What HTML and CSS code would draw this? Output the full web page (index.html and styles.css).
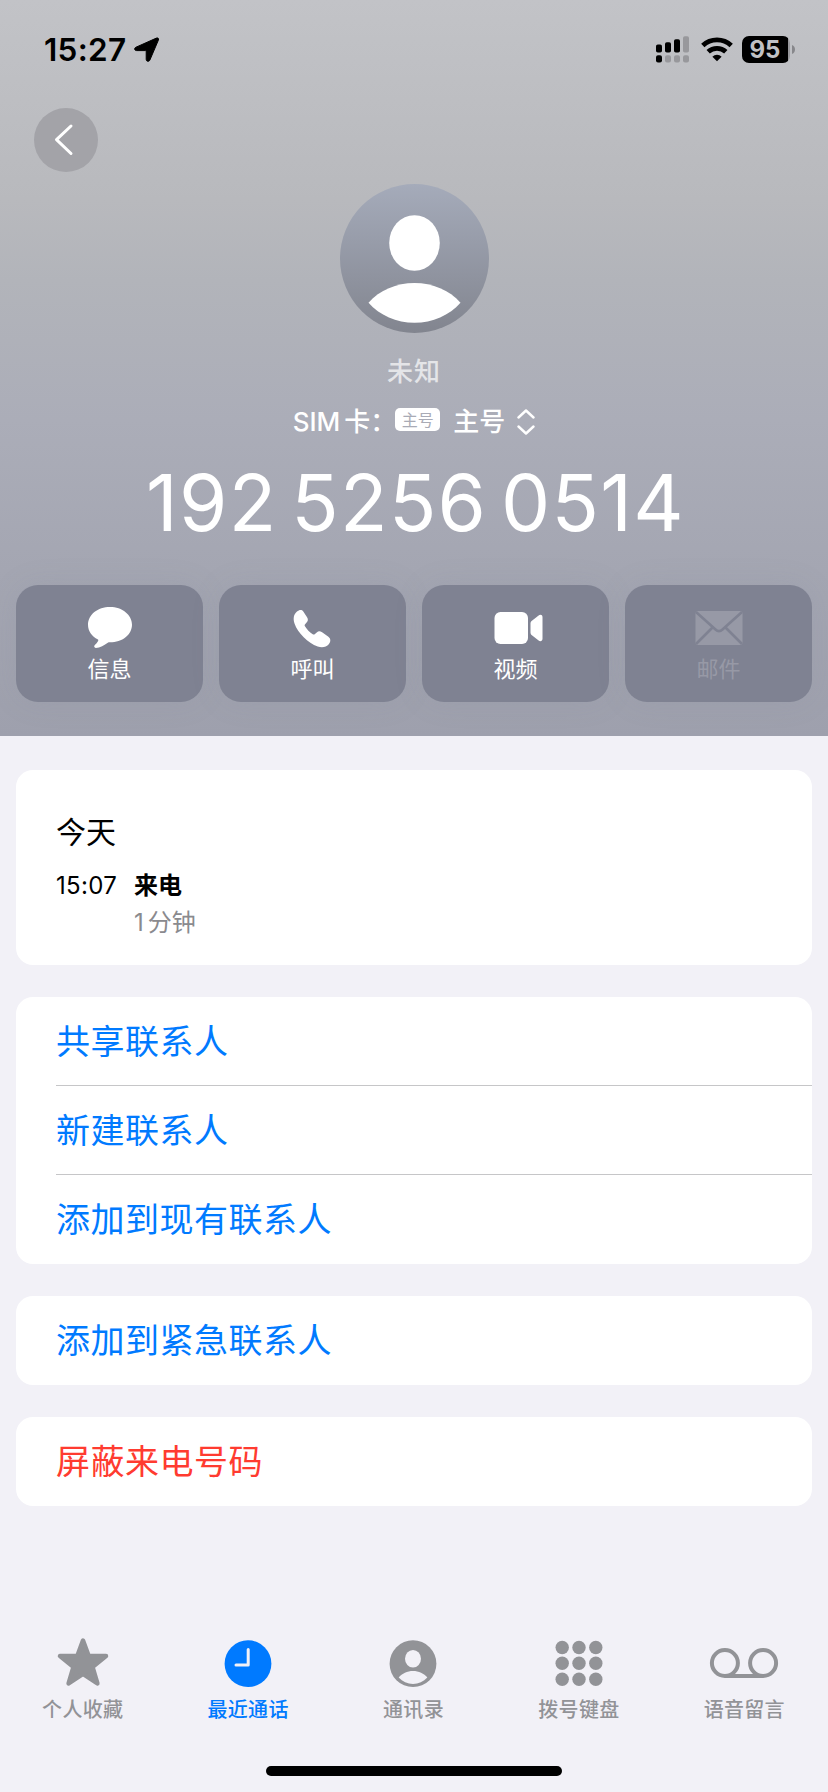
FILE: index.html
```html
<!DOCTYPE html>
<html lang="zh-CN">
<head>
  <meta charset="UTF-8" />
  <meta name="viewport" content="width=device-width, initial-scale=1.0"/>
  <title>最近通话</title>
  <link rel="stylesheet" href="styles.css">
</head>
<body>
  <header class="header">
    <!-- Status bar -->
    <div class="status-bar">
      <span class="time">15:27</span>
      <svg class="location" width="26" height="26" viewBox="0 0 26 26">
        <path d="M2 10.2 22.4 1.1c1.5-.7 2.7.5 2 2L15.9 23c-.8 2-3.7 1.6-3.7-.6V14.200a.6.6 0 0 0-.6-.6H2.700C.3 13.600-.1 11.100 2 10.200z" stroke="#000" stroke-width="1" stroke-linejoin="round"/>
      </svg>
      <div class="status-icons">
        <svg width="34" height="27" viewBox="0 0 34 27">
          <g>
            <rect x="0" y="8.500" width="6" height="8" rx="1.800"/>
            <rect x="9" y="6.300" width="6" height="10.200" rx="1.800"/>
            <rect x="18" y="3.200" width="6" height="13.300" rx="1.800"/>
            <rect x="0" y="19.200" width="6" height="7.200" rx="2"/>
          </g>
          <g fill="#98989c">
            <rect x="27" y="0.300" width="6" height="16.200" rx="1.800"/>
            <rect x="9" y="19.200" width="6" height="7.200" rx="2"/>
            <rect x="18" y="19.200" width="6" height="7.200" rx="2"/>
            <rect x="27" y="19.200" width="6" height="7.200" rx="2"/>
          </g>
        </svg>
        <svg class="wifi" width="32" height="25" viewBox="0 0 32 25">
          <g fill="none" stroke="#000" stroke-width="4.800">
            <path d="M1.800 8.600a20.500 20.500 0 0 1 28.400 0"/>
            <path d="M7.200 14.800a12.800 12.800 0 0 1 17.600 0"/>
          </g>
          <path d="M16 24.300l-4.600-4.600a6.600 6.600 0 0 1 9.200 0z"/>
        </svg>
        <div class="battery"><span class="battery-level">95</span></div>
        <svg class="battery-cap" width="3" height="9" viewBox="0 0 3 9"><path d="M0 0c4 1.500 4 7.500 0 9z" fill="#87878b"/></svg>
      </div>
    </div>

    <a class="back" href="#" aria-label="返回">
      <svg width="64" height="64" viewBox="0 0 64 64">
        <path d="M37 18 22.500 31.600 37 45.500" fill="none" stroke="#fff" stroke-width="3" stroke-linecap="round" stroke-linejoin="round"/>
      </svg>
    </a>

    <!-- Caller -->
    <svg class="avatar" width="150" height="150" viewBox="0 0 150 150">
      <defs>
        <linearGradient id="avatarFill" x1="0" y1="0" x2="0" y2="1">
          <stop offset="0" stop-color="#a5abba"/>
          <stop offset="1" stop-color="#82858f"/>
        </linearGradient>
      </defs>
      <circle cx="75.500" cy="74.500" r="74.500" fill="url(#avatarFill)"/>
      <ellipse cx="75.500" cy="59" rx="25.300" ry="27.800" fill="#fff"/>
      <path d="M29.500 118.800c11-12.500 28-19.700 46-19.700s35 7.200 46 19.700c-11 12.500-28 20-46 20s-35-7.500-46-20z" fill="#fff"/>
    </svg>
    <div class="caller-name">未知</div>
    <div class="sim">
      <span class="sim-label">SIM<span class="sim-card">卡：</span></span>
      <span class="sim-badge">主号</span>
      <span class="sim-line">主号</span>
      <svg width="18" height="26" viewBox="0 0 18 26">
        <path d="M1.500 8.500 9 1.500l7.500 7M1.500 17.500l7.500 7 7.500-7" fill="none" stroke="#fff" stroke-width="2.400" stroke-linecap="round" stroke-linejoin="round"/>
      </svg>
    </div>
    <div class="number">192 5256 0514</div>

    <div class="actions">
      <a class="action" href="#">
        <svg width="48" height="44" viewBox="0 0 48 44" fill="#fff">
          <path d="M24 1C11.700 1 2 8.700 2 18.800c0 6.200 3.600 11.600 10 14.800.4.300.4.800.1 1.300-.9 1.500-2 3-3.300 4.200-1.200 1.200-.6 2.800 1 2.800 4.200-.2 8.600-2.800 12-5.200.6-.4 1.200-.4 2.200-.4 12.300 0 22-7.700 22-17.600S36.300 1 24 1z"/>
        </svg>
        <span>信息</span>
      </a>
      <a class="action" href="#">
        <svg width="48" height="44" viewBox="1 0 48 44" fill="#fff">
          <path d="M9 5.600C5.500 8.500 5 13 6.500 17.400c1.700 5 5.100 9.700 9.200 13.800 4.200 4.200 9 7.700 14 9.300 4.300 1.400 8.500.8 11.300-2.600 2-2.400 1.800-5.200-.6-7.100l-6.300-4.500c-2.300-1.600-3.600-1.400-5.400.2l-2 1.800c-.5.400-1 .4-1.600.1-3.300-1.900-6.500-5.300-8.300-8.400-.3-.6-.3-1.100.1-1.600l1.700-2c1.600-1.800 1.700-3.300.3-5.500l-3.600-5.400C13.600 3.200 11.200 3.700 9 5.600z"/>
        </svg>
        <span>呼叫</span>
      </a>
      <a class="action" href="#">
        <svg width="54" height="44" viewBox="-1.500 0 54 44" fill="#fff">
          <rect x="4" y="6" width="33.500" height="32" rx="6"/>
          <path d="M40 17.500c0-1.300.5-2 1.400-2.800l6.400-5c2-1.600 4.200-.8 4.200 1.500v21.600c0 2.300-2.200 3.100-4.200 1.500l-6.400-5c-.9-.8-1.400-1.500-1.400-2.800z"/>
        </svg>
        <span>视频</span>
      </a>
      <a class="action disabled" href="#">
        <svg width="48" height="44" viewBox="0 0 48 44">
          <rect x="0.500" y="5" width="47" height="34" rx="2.500" fill="#9799a6"/>
          <path d="M1 6 20.500 23.500c2.400 2.200 4.600 2.200 7 0L47 6M1 38l16-16M47 38 31 22" fill="none" stroke="#7f8292" stroke-width="2.600"/>
        </svg>
        <span>邮件</span>
      </a>
    </div>
  </header>

  <main class="content">
    <section class="card history">
      <h2 class="day">今天</h2>
      <div class="call">
        <span class="call-time">15:07</span>
        <div>
          <div class="call-type">来电</div>
          <div class="call-length">1<span class="unit">分钟</span></div>
        </div>
      </div>
    </section>

    <section class="card">
      <a class="row" href="#">共享联系人</a>
      <a class="row" href="#">新建联系人</a>
      <a class="row" href="#">添加到现有联系人</a>
    </section>

    <section class="card">
      <a class="row" href="#">添加到紧急联系人</a>
    </section>

    <section class="card">
      <a class="row danger" href="#">屏蔽来电号码</a>
    </section>
  </main>

  <!-- Tabs -->
  <nav class="tabs">
    <a class="tab" href="#">
      <svg width="54" height="54" viewBox="0 0 54 54">
        <path d="M27 5.500 32.600 20.700 50 21 36.500 32 41.400 48.500 27 38.900 12.600 48.500 17.500 32 4 21 21.400 20.700z" fill="currentColor" stroke="currentColor" stroke-width="4.500" stroke-linejoin="round"/>
      </svg>
      <span>个人收藏</span>
    </a>
    <a class="tab active" href="#">
      <svg width="54" height="54" viewBox="0 0 54 54">
        <circle cx="27" cy="28.700" r="23.400" fill="currentColor"/>
        <path d="M27.200 14.500V30H15" fill="none" stroke="#f2f1f7" stroke-width="3" stroke-linecap="round" stroke-linejoin="round"/>
      </svg>
      <span>最近通话</span>
    </a>
    <a class="tab" href="#">
      <svg width="54" height="54" viewBox="0 0 54 54">
        <circle cx="27" cy="28.700" r="23.400" fill="currentColor"/>
        <ellipse cx="27" cy="23.800" rx="8" ry="8.800" fill="#f2f1f7"/>
        <path d="M12.700 42.500c3.300-4 8.600-6.500 14.300-6.500s11 2.500 14.300 6.500C37.500 46.800 32.500 49 27 49s-10.500-2.200-14.300-6.500z" fill="#f2f1f7"/>
      </svg>
      <span>通讯录</span>
    </a>
    <a class="tab" href="#">
      <svg width="54" height="54" viewBox="0 0 54 54" fill="currentColor">
        <circle cx="10.200" cy="12.500" r="6.700"/><circle cx="27" cy="12.500" r="6.700"/><circle cx="43.800" cy="12.500" r="6.700"/>
        <circle cx="10.200" cy="28.300" r="6.700"/><circle cx="27" cy="28.300" r="6.700"/><circle cx="43.800" cy="28.300" r="6.700"/>
        <circle cx="10.200" cy="44.200" r="6.700"/><circle cx="27" cy="44.200" r="6.700"/><circle cx="43.800" cy="44.200" r="6.700"/>
      </svg>
      <span>拨号键盘</span>
    </a>
    <a class="tab" href="#">
      <svg width="70" height="54" viewBox="0 0 70 54" fill="none" stroke="currentColor" stroke-width="4">
        <circle cx="15.900" cy="28" r="13"/>
        <circle cx="54.100" cy="28" r="13"/>
        <path d="M15.900 41h38.200"/>
      </svg>
      <span>语音留言</span>
    </a>
  </nav>
  <div class="home-indicator"></div>
</body>
</html>
```
FILE: styles.css
```css
* {
  box-sizing: border-box;
}

body {
  margin: 0;
  width: 828px;
  height: 1792px;
  display: flex;
  flex-direction: column;
  background: #f2f1f7;
  font-family: Inter, 'Noto Sans CJK SC', sans-serif;
  color: #000;
  overflow: hidden;
}

a {
  color: inherit;
  text-decoration: none;
}

svg {
  display: block;
  flex-shrink: 0;
}

.header {
  height: 736px;
  display: flex;
  flex-direction: column;
  align-items: center;
  background: linear-gradient(#c2c3c7 0, #b8b9bd 200px, #b2b4ba 280px, #abadb8 420px, #a4a6b2 570px, #9ea0ad 736px);
  color: #fff;
}

/* status bar */
.status-bar {
  width: 100%;
  height: 99px;
  padding: 0 33px 0 44px;
  display: flex;
  align-items: center;
  color: #000;
}

.time {
  font-size: 31.500px;
  font-weight: 600;
  letter-spacing: 0.3px;
}

.location {
  margin-left: 8px;
}

.status-icons {
  margin-left: auto;
  display: flex;
  align-items: center;
}

.wifi {
  margin-left: 11px;
}

.battery {
  width: 48px;
  height: 27px;
  margin-left: 9px;
  border-radius: 7px;
  background: linear-gradient(to right, #000 46.500px, #98989c 46.500px);
  text-align: center;
}

.battery-level {
  display: block;
  font-size: 24px;
  font-weight: 700;
  line-height: 27px;
  width: 46px;
  color: #c0c1c5;
}

.battery-cap {
  margin-left: 2px;
}

.back {
  align-self: flex-start;
  width: 64px;
  height: 64px;
  margin: 9px 0 0 34px;
  border-radius: 50%;
  background: #a3a3a8;
}

/* caller */
.avatar {
  margin-top: 12px;
}

.caller-name {
  margin-top: 18px;
  height: 40px;
  line-height: 40px;
  font-size: 26px;
  font-weight: 500;
  letter-spacing: 1px;
  color: #e4e5e8;
}

.sim {
  height: 40px;
  margin-top: 10px;
  display: flex;
  align-items: center;
  font-size: 26px;
  font-weight: 500;
  line-height: 40px;
}

.sim-label {
  margin-right: -1px;
}

.sim-card {
  margin-left: 4px;
}

.sim-badge {
  width: 45px;
  height: 23px;
  margin-bottom: 6px;
  border-radius: 5px;
  background: #fff;
  color: #a9abb6;
  font-size: 16px;
  font-weight: 400;
  line-height: 24px;
  text-align: center;
}

.sim-line {
  margin: 0 12px 0 13px;
}

.number {
  margin-top: 5px;
  height: 112px;
  padding-left: 3px;
  font-size: 78px;
  line-height: 112px;
  letter-spacing: 1.300px;
  word-spacing: -9.500px;
  white-space: nowrap;
}

.actions {
  width: 100%;
  margin-top: 26px;
  padding: 0 16px;
  display: grid;
  grid-template-columns: repeat(4, 1fr);
  gap: 16px;
}

.action {
  height: 117px;
  padding-top: 21px;
  display: flex;
  flex-direction: column;
  align-items: center;
  border-radius: 22px;
  background: #7f8292;
  box-shadow: 0 0 30px rgba(127, 130, 146, 0.12);
  font-size: 22px;
  line-height: 38px;
}

.action.disabled {
  color: #9799a6;
}

/* cards */
.content {
  padding: 34px 16px 0;
  display: flex;
  flex-direction: column;
  gap: 32px;
}

.card {
  border-radius: 17px;
  background: #fff;
}

.history {
  height: 195px;
  padding: 40px 40px 0;
}

.day {
  margin: 0;
  font-size: 30px;
  font-weight: 400;
  line-height: 44px;
}

.call {
  margin-top: 13px;
  display: flex;
  font-size: 24px;
  line-height: 37px;
}

.call-time {
  width: 78px;
  letter-spacing: 0.3px;
}

.call-type {
  font-weight: 700;
}

.call-length {
  color: #8a8a8e;
}

.unit {
  margin-left: 4px;
}

.row {
  display: block;
  height: 89px;
  margin-left: 40px;
  font-size: 34px;
  line-height: 90px;
  letter-spacing: 0.5px;
  color: #007aff;
}

.row:not(:last-child) {
  border-bottom: 1px solid #c6c6c8;
}

.danger {
  color: #ff3b30;
}

/* tab bar */
.tabs {
  margin-top: auto;
  padding-right: 1px;
  display: grid;
  grid-template-columns: repeat(5, 1fr);
  height: 131px;
}

.tab {
  display: flex;
  flex-direction: column;
  align-items: center;
  gap: 4px;
  font-size: 20px;
  font-weight: 500;
  line-height: 34px;
  letter-spacing: 0.3px;
  color: #929397;
}

.active {
  color: #007aff;
}

.home-indicator {
  width: 296px;
  height: 10px;
  margin: 0 auto 16px;
  border-radius: 5px;
  background: #000;
}
```
